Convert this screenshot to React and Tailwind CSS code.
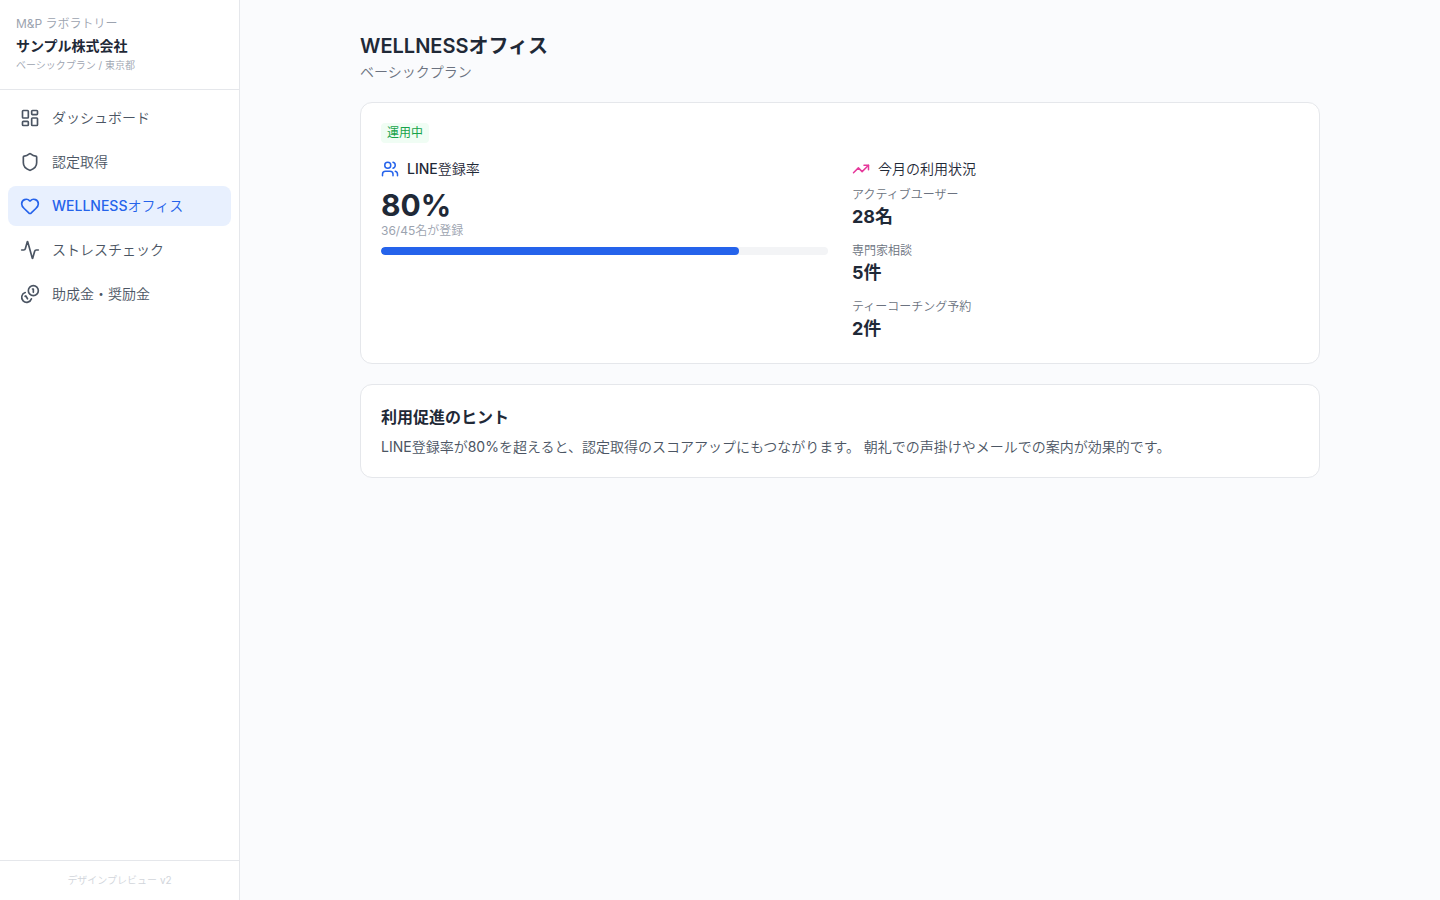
import { Activity, Heart, LayoutDashboard, Shield, TrendingUp, Users } from "lucide-react";

function CoinsIcon({ size = 20 }) {
  return (
    <svg
      width={size}
      height={size}
      viewBox="0 0 24 24"
      fill="none"
      stroke="currentColor"
      strokeWidth="2"
      strokeLinecap="round"
      strokeLinejoin="round"
      aria-hidden="true"
    >
      <path d="M13.744 17.736a6 6 0 1 1-7.48-7.48" />
      <path d="M15 6h1v4" />
      <path d="m6.134 14.768.866-.5 2 3.464" />
      <circle cx="16" cy="8" r="6" />
    </svg>
  );
}

const navItems = [
  { label: "ダッシュボード", icon: LayoutDashboard },
  { label: "認定取得", icon: Shield },
  { label: "WELLNESSオフィス", icon: Heart, active: true },
  { label: "ストレスチェック", icon: Activity },
  { label: "助成金・奨励金", icon: CoinsIcon },
];

const usage = [
  { label: "アクティブユーザー", value: "28名" },
  { label: "専門家相談", value: "5件" },
  { label: "ティーコーチング予約", value: "2件" },
];

const registered = 36;
const total = 45;
const rate = Math.round((registered / total) * 100);

function Sidebar() {
  return (
    <aside className="flex w-60 shrink-0 flex-col border-r border-[#e5e7eb] bg-white">
      <div className="border-b border-[#e5e7eb] p-4">
        <p className="text-xs text-[#9ca3af]">M&amp;P ラボラトリー</p>
        <p className="mt-1 font-['Inter','Noto_Sans_CJK_JP',sans-serif] text-sm font-bold text-[#1f2937]">
          サンプル株式会社
        </p>
        <p className="mt-0.5 text-[10px] leading-[15px] text-[#9ca3af]">ベーシックプラン / 東京都</p>
      </div>
      <nav className="flex flex-1 flex-col gap-1 p-2">
        {navItems.map(({ label, icon: Icon, active }) => (
          <a
            key={label}
            href="#"
            aria-current={active ? "page" : undefined}
            className={
              active
                ? "flex h-10 items-center gap-3 rounded-lg bg-[#e8f0fe] px-3 text-sm font-medium text-[#2563eb]"
                : "flex h-10 items-center gap-3 rounded-lg px-3 text-sm text-[#4b5563]"
            }
          >
            <Icon size={20} aria-hidden="true" />
            {label}
          </a>
        ))}
      </nav>
      <footer className="border-t border-[#e5e7eb] p-3 text-center text-[10px] leading-[15px] text-[#d1d5db]">
        デザインプレビュー v2
      </footer>
    </aside>
  );
}

export default function App() {
  return (
    <div className="flex min-h-screen bg-[#fafbfd] font-['Inter','Noto_Sans_CJK_JP_DemiLight','Noto_Sans_CJK_JP',sans-serif] text-[#1f2937]">
      <Sidebar />
      <main className="min-w-0 flex-1 p-8">
        <div className="mx-auto flex max-w-[960px] flex-col gap-5">
          <header>
            <h1 className="font-['Inter','Noto_Sans_CJK_JP',sans-serif] text-xl font-semibold">WELLNESSオフィス</h1>
            <p className="mt-0.5 text-sm text-[#6b7280]">ベーシックプラン</p>
          </header>
          <section className="rounded-xl border border-[#e5e7eb] bg-white p-5">
            <div className="flex">
              <span className="rounded bg-[#f0fdf4] px-1.5 py-0.5 font-['Inter','Noto_Sans_CJK_JP',sans-serif] text-xs text-[#16a34a]">
                運用中
              </span>
            </div>
            <div className="mt-4 grid grid-cols-2 gap-6">
              <div>
                <h2 className="flex items-center gap-2 text-sm font-medium">
                  <Users size={18} className="text-[#2563eb]" aria-hidden="true" />
                  LINE登録率
                </h2>
                <p className="mt-2 text-3xl font-bold">{rate}%</p>
                <p className="text-xs text-[#9ca3af]">{registered}/{total}名が登録</p>
                <div
                  role="progressbar"
                  aria-label="LINE登録率"
                  aria-valuenow={rate}
                  aria-valuemin={0}
                  aria-valuemax={100}
                  className="mt-2 h-2 overflow-hidden rounded-full bg-[#f3f4f6]"
                >
                  <div className="h-full rounded-full bg-[#2563eb]" style={{ width: `${rate}%` }} />
                </div>
              </div>
              <div>
                <h2 className="flex items-center gap-2 text-sm font-medium">
                  <TrendingUp size={18} className="text-[#e6399b]" aria-hidden="true" />
                  今月の利用状況
                </h2>
                <dl className="mt-2 flex flex-col gap-3">
                  {usage.map(({ label, value }) => (
                    <div key={label}>
                      <dt className="text-xs text-[#6b7280]">{label}</dt>
                      <dd className="font-['Inter','Noto_Sans_CJK_JP',sans-serif] text-lg font-bold">{value}</dd>
                    </div>
                  ))}
                </dl>
              </div>
            </div>
          </section>
          <section className="rounded-xl border border-[#e5e7eb] bg-white p-5">
            <h2 className="font-['Inter','Noto_Sans_CJK_JP',sans-serif] text-base font-semibold">利用促進のヒント</h2>
            <p className="mt-2 text-sm text-[#4b5563]">
              LINE登録率が80%を超えると、認定取得のスコアアップにもつながります。 朝礼での声掛けやメールでの案内が効果的です。
            </p>
          </section>
        </div>
      </main>
    </div>
  );
}
